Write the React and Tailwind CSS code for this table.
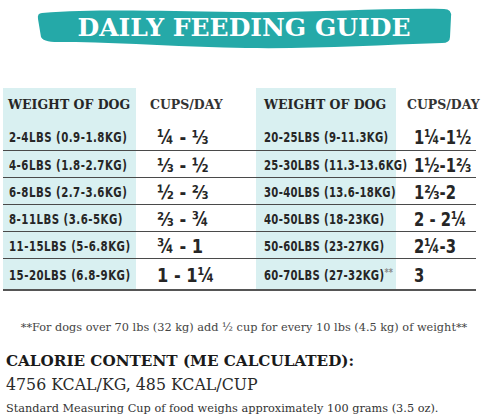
import React from 'react';

const rows = [
  { w1: '2-4LBS (0.9-1.8KG)', c1: '¼ - ⅓', w2: '20-25LBS (9-11.3KG)', c2: '1¼-1½' },
  { w1: '4-6LBS (1.8-2.7KG)', c1: '⅓ - ½', w2: '25-30LBS (11.3-13.6KG)', c2: '1½-1⅔' },
  { w1: '6-8LBS (2.7-3.6KG)', c1: '½ - ⅔', w2: '30-40LBS (13.6-18KG)', c2: '1⅔-2' },
  { w1: '8-11LBS (3.6-5KG)', c1: '⅔ - ¾', w2: '40-50LBS (18-23KG)', c2: '2 - 2¼' },
  { w1: '11-15LBS (5-6.8KG)', c1: '¾ - 1', w2: '50-60LBS (23-27KG)', c2: '2¼-3' },
  { w1: '15-20LBS (6.8-9KG)', c1: '1 - 1¼', w2: '60-70LBS (27-32KG)', c2: '3', star: true },
];

const serif = "font-['DejaVu_Serif',serif]";
const narrow = "font-['DejaVu_Sans',sans-serif] font-stretch-condensed";

const Banner = () => (
  <div className="relative mx-auto mt-[7px] h-[42px] w-[416px] flex items-center justify-center">
    <svg className="absolute inset-0" width="416" height="42" viewBox="0 0 416 42">
      <path
        d="M6,6 C60,2 120,4 200,5 C280,6 340,1 408,2 Q416,2 415,10 L414,30 Q414,36 406,36 C340,38 280,42 210,41 C150,40 90,36 40,35 C20,35 8,36 5,30 L2,12 Q1,6 6,6 Z"
        fill="#25a9a8"
      />
    </svg>
    <h1 className={`relative ${serif} font-bold text-[25px] text-white leading-none -mt-[2px]`}>
      DAILY FEEDING GUIDE
    </h1>
  </div>
);

export default function App() {
  return (
    <div className="w-[488px] h-[417px] bg-white overflow-hidden text-[#262626]">
      <Banner />

      {/* Table */}
      <div className="ml-[3px] mt-[39px] w-[473px]">
        <div className="flex h-[34px] items-center">
          <div className={`w-[133px] h-full bg-[#d9f0f1] pl-[5px] flex items-center ${serif} font-bold text-[12.5px] whitespace-nowrap`}>
            WEIGHT OF DOG
          </div>
          <div className={`w-[120px] h-full pl-[14px] flex items-center ${serif} font-bold text-[12.5px] text-[#333]`}>
            CUPS/DAY
          </div>
          <div className={`w-[140px] h-full bg-[#d9f0f1] pl-[8px] flex items-center ${serif} font-bold text-[12.5px] whitespace-nowrap`}>
            WEIGHT OF DOG
          </div>
          <div className={`w-[80px] h-full pl-[11px] flex items-center ${serif} font-bold text-[12.5px] text-[#333] whitespace-nowrap`}>
            CUPS/DAY
          </div>
        </div>

        {rows.map((r, i) => (
          <div
            key={i}
            className={`flex ${i === 0 ? 'h-[29px]' : i === rows.length - 1 ? 'h-[32px]' : 'h-[27px]'} ${i === rows.length - 1 ? 'border-b-2 border-[#555]' : 'border-b border-[#4a4a4a]'}`}
          >
            <div className={`w-[133px] bg-[#d9f0f1] pl-[6px] pt-[2px] flex items-center ${narrow} font-bold text-[14px] tracking-[0.6px] whitespace-nowrap`}>
              <span className="inline-block origin-left scale-x-[0.81]">{r.w1}</span>
            </div>
            <div className={`w-[120px] pl-[21px] pt-[1px] flex items-center ${narrow} font-bold text-[20px] whitespace-nowrap`}>
              <span className="inline-block origin-left scale-x-[0.9]">{r.c1}</span>
            </div>
            <div className={`w-[140px] bg-[#d9f0f1] pl-[8px] pt-[2px] flex items-center ${narrow} font-bold text-[14px] tracking-[0.4px] whitespace-nowrap`}>
              <span className="inline-block origin-left scale-x-[0.8]">
                {r.w2}
                {r.star && <span className="text-[#888] text-[11px] align-[4px]">**</span>}
              </span>
            </div>
            <div className={`w-[80px] pl-[18px] pt-[1px] flex items-center ${narrow} font-bold text-[20px] whitespace-nowrap`}>
              <span className="inline-block origin-left scale-x-[0.82]">{r.c2}</span>
            </div>
          </div>
        ))}
      </div>

      {/* Notes */}
      <p className={`mt-[29px] text-center ${serif} text-[11.3px] text-[#444] whitespace-nowrap`}>
        **For dogs over 70 lbs (32 kg) add ½ cup for every 10 lbs (4.5 kg) of weight**
      </p>
      <div className="pl-[6px] mt-[14px]">
        <h2 className={`${serif} font-bold text-[15.2px] leading-[20px] text-[#1a1a1a] whitespace-nowrap`}>
          CALORIE CONTENT (ME CALCULATED):
        </h2>
        <p className={`${serif} text-[15.8px] leading-[28px] text-[#2a2a2a] whitespace-nowrap`}>
          4756 KCAL/KG, 485 KCAL/CUP
        </p>
        <p className={`${serif} text-[11.3px] leading-[20px] text-[#333] whitespace-nowrap`}>
          Standard Measuring Cup of food weighs approximately 100 grams (3.5 oz).
        </p>
      </div>
    </div>
  );
}
